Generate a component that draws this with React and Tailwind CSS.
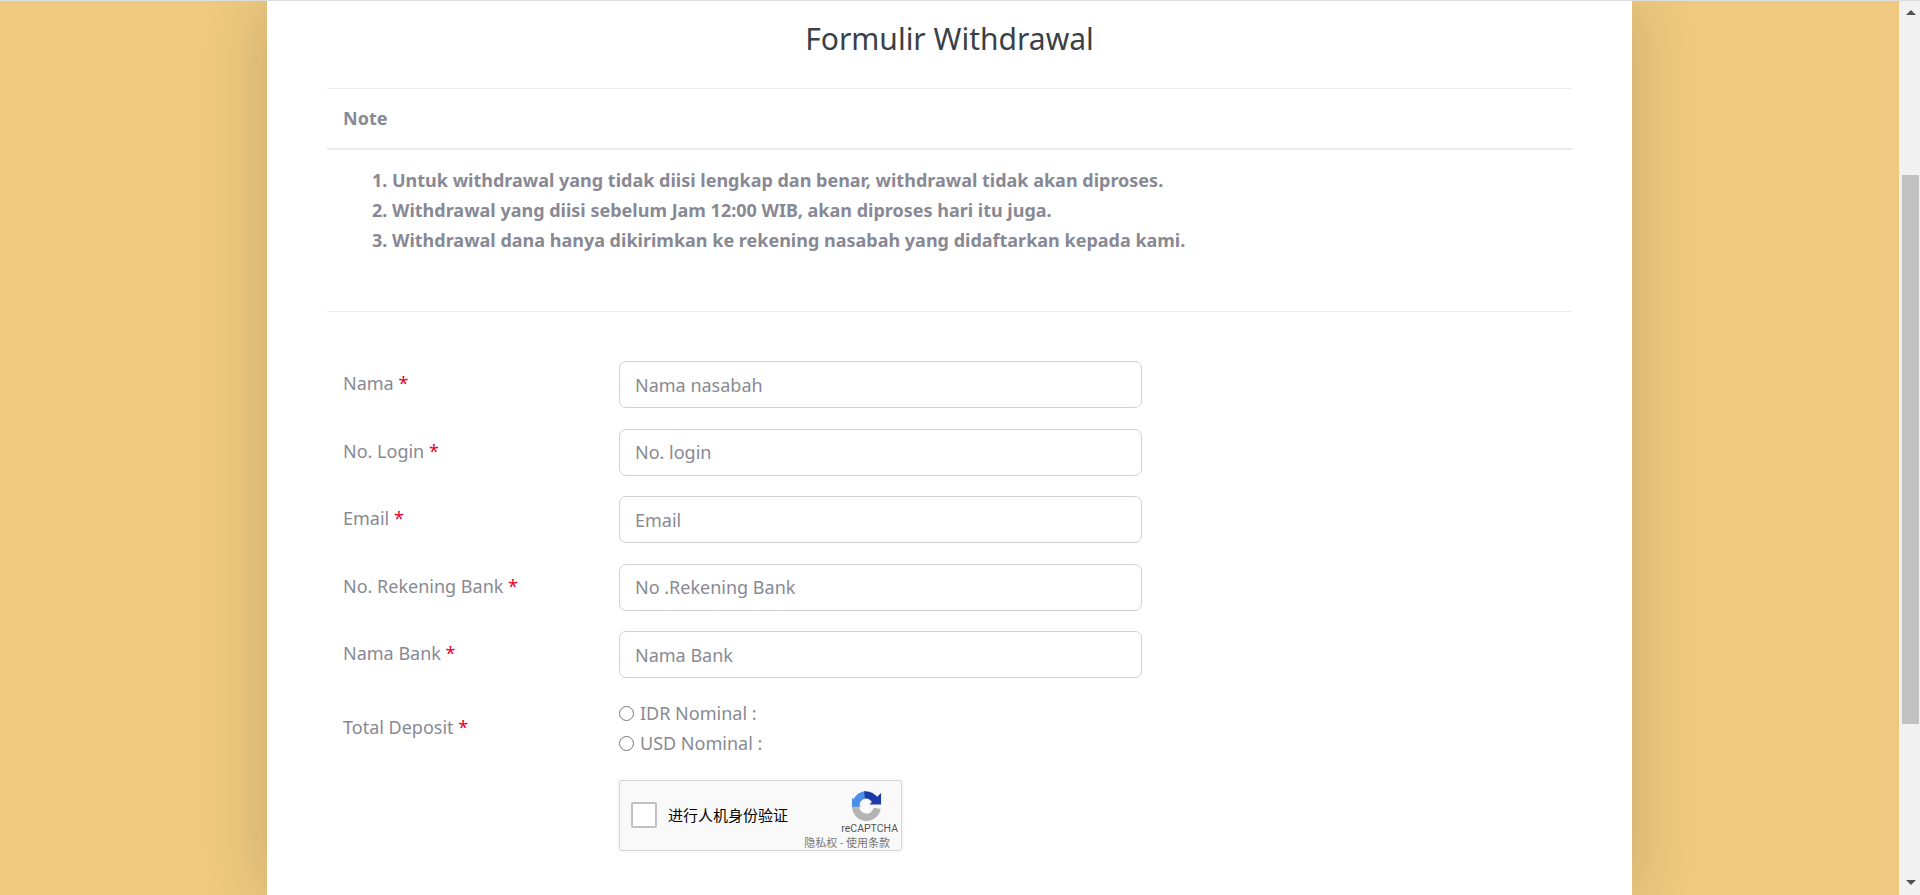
import React from 'react';

const fields = [
  { label: 'Nama', placeholder: 'Nama nasabah' },
  { label: 'No. Login', placeholder: 'No. login' },
  { label: 'Email', placeholder: 'Email' },
  { label: 'No. Rekening Bank', placeholder: 'No .Rekening Bank' },
  { label: 'Nama Bank', placeholder: 'Nama Bank' },
];

function RecaptchaLogo() {
  return (
    <svg viewBox="0 0 32 32" className="w-[31px] h-[31px]">
      {/* grey lower arc */}
      <path d="M5 15 A11 11 0 0 0 27 19" fill="none" stroke="#b4b4b4" strokeWidth="7.5" />
      <polygon points="0,17 10,17 5,10" fill="#b4b4b4" />
      {/* light blue upper left */}
      <path d="M5 17 A11 11 0 0 1 15 5" fill="none" stroke="#4a90e8" strokeWidth="7.5" />
      <polygon points="1,17 10,17 1,8" fill="#4a90e8" />
      {/* dark blue upper right */}
      <path d="M14 5 A11 11 0 0 1 25 11" fill="none" stroke="#1c3aa9" strokeWidth="7.5" />
      <polygon points="31,3 31,15 19,15" fill="#1c3aa9" />
    </svg>
  );
}

function Recaptcha() {
  return (
    <div className="w-[283px] h-[71px] bg-[#f9f9f9] border border-[#d6d6d6] rounded-[3px] shadow-[0_0_4px_rgba(0,0,0,0.08)] flex items-center pl-[11px] pr-[3px] font-['Roboto',sans-serif]">
      <div className="w-[26px] h-[26px] bg-white border-2 border-[#c1c1c1] rounded-[2px] shrink-0"></div>
      <span className="ml-[11px] text-[15px] text-black font-['Noto_Sans_CJK_SC',sans-serif]">进行人机身份验证</span>
      <div className="ml-auto w-[92px] h-full flex flex-col items-end">
        <div className="w-full flex justify-center pl-[28px] pt-[9px]"><RecaptchaLogo /></div>
        <span className="text-[10.5px] leading-[14px] text-[#555] mt-[1px]">reCAPTCHA</span>
        <span className="text-[11px] leading-[13px] text-[#777] whitespace-nowrap pr-[8px] font-['Noto_Sans_CJK_SC',sans-serif]">隐私权 - 使用条款</span>
      </div>
    </div>
  );
}

function FormRow({ label, placeholder }) {
  return (
    <div className="flex mb-[20.5px]">
      <label className="w-[276px] pl-4 pt-[7px] leading-[30px]">
        {label} <span className="text-[#e7002a]">*</span>
      </label>
      <input
        placeholder={placeholder}
        className="ml-4 w-[523px] h-[47px] px-[15px] bg-white border border-[#cfd1d6] rounded-[7px] outline-none text-[18px] placeholder:text-[#888994]"
      />
    </div>
  );
}

export default function App() {
  return (
    <div className="flex h-[895px] overflow-hidden font-['Noto_Sans',sans-serif] text-[18px] text-[#888994] border-t border-[#dddddd]">
      <div className="flex-1 bg-[#eec97f]">
        <div className="mx-auto w-[1365px] h-full bg-white px-[60px] shadow-[0_0_60px_rgba(0,0,0,0.16)]">
          <h1 className="h-[87px] flex items-center justify-center pb-[12px] text-[30px] font-normal text-[#3b3f47]">
            Formulir Withdrawal
          </h1>

          <div className="border-t border-[#eeeeee]">
            <div className="h-[61px] flex items-center px-4 font-bold border-b-2 border-[#e9eaec]">Note</div>
            <ol className="list-decimal pl-[65px] pt-[15px] pb-[56px] font-bold leading-[30px] border-b border-[#eeeeee]">
              <li>Untuk withdrawal yang tidak diisi lengkap dan benar, withdrawal tidak akan diproses.</li>
              <li>Withdrawal yang diisi sebelum Jam 12:00 WIB, akan diproses hari itu juga.</li>
              <li>Withdrawal dana hanya dikirimkan ke rekening nasabah yang didaftarkan kepada kami.</li>
            </ol>
          </div>

          <form className="pt-[49px]">
            {fields.map((f) => (
              <FormRow key={f.label} label={f.label} placeholder={f.placeholder} />
            ))}
            <div className="flex">
              <label className="w-[276px] pl-4 pt-[13px] leading-[30px]">
                Total Deposit <span className="text-[#e7002a]">*</span>
              </label>
              <div className="ml-4">
                <div className="flex items-center h-[30px] gap-[6px]">
                  <input type="radio" name="nominal" className="w-[15px] h-[15px] m-0" />
                  <span>IDR Nominal :</span>
                </div>
                <div className="flex items-center h-[30px] gap-[6px]">
                  <input type="radio" name="nominal" className="w-[15px] h-[15px] m-0" />
                  <span>USD Nominal :</span>
                </div>
                <div className="mt-[21px]">
                  <Recaptcha />
                </div>
              </div>
            </div>
          </form>
        </div>
      </div>

      {/* scrollbar */}
      <div className="w-[21px] bg-[#f1f1f1] flex flex-col items-center pl-[2px] pt-[9px]">
        <div className="w-0 h-0 border-x-[5px] border-x-transparent border-b-[5px] border-b-[#505050]"></div>
        <div className="w-[17px] h-[549px] bg-[#c1c1c1] mt-[160px]"></div>
        <div className="w-0 h-0 border-x-[5px] border-x-transparent border-t-[5px] border-t-[#505050] mt-[156px]"></div>
      </div>
    </div>
  );
}
